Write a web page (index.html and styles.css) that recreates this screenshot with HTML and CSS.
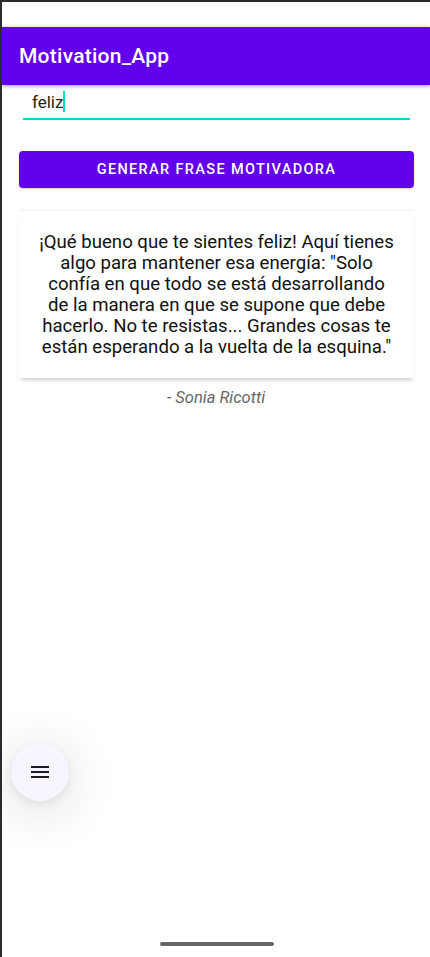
FILE: index.html
```html
<!DOCTYPE html>
<html lang="es">
<head>
<meta charset="utf-8">
<link rel="stylesheet" href="styles.css">
</head>
<body>
<div class="device">
  <div class="statusbar"></div>
  <header class="appbar"><h1 class="title">Motivation_App</h1></header>
  <main class="content">
    <div class="field"><span class="field-text">feliz</span><span class="caret"></span></div>
    <button class="btn">GENERAR FRASE MOTIVADORA</button>
    <section class="card">
      <p class="quote">¡Qué bueno que te sientes feliz! Aquí tienes<br>algo para mantener esa energía: "Solo<br>confía en que todo se está desarrollando<br>de la manera en que se supone que debe<br>hacerlo. No te resistas... Grandes cosas te<br>están esperando a la vuelta de la esquina."</p>
    </section>
    <p class="author">- Sonia Ricotti</p>
  </main>
  <button class="fab" aria-label="menu">
    <svg width="18" height="12" viewBox="0 0 18 12"><rect x="0" y="0" width="18" height="2" fill="#1c1b1f"/><rect x="0" y="5" width="18" height="2" fill="#1c1b1f"/><rect x="0" y="10" width="18" height="2" fill="#1c1b1f"/></svg>
  </button>
  <div class="home-indicator"></div>
</div>
</body>
</html>
```
FILE: styles.css
```css
html, body { margin: 0; padding: 0; background: #fff; }
.device {
  position: relative;
  width: 430px;
  height: 957px;
  box-sizing: border-box;
  border-top: 2px solid #2b2b2b;
  border-left: 2px solid #2b2b2b;
  background: #fff;
  font-family: Roboto, "Noto Sans", sans-serif;
  overflow: hidden;
}
.statusbar { height: 25px; background: #fff; }
.appbar {
  height: 58px;
  background: #6200ee;
  display: flex;
  align-items: center;
  padding-left: 17px;
  box-shadow: 0 2px 3px rgba(0,0,0,0.25), 0 -1px 3px rgba(0,0,0,0.12);
  position: relative;
  z-index: 1;
}
.title { margin: 0; color: #fff; font-size: 21px; font-weight: 500; letter-spacing: 0.25px; }
.content { display: flex; flex-direction: column; }
.field {
  margin: 0 20px 0 21px;
  height: 33px;
  border-bottom: 2px solid #03dac5;
  display: flex;
  align-items: center;
  padding-left: 9px;
}
.field-text { font-size: 17px; color: #222; }
.caret { width: 2px; height: 21px; background: #03dac5; }
.btn {
  margin: 31px 16px 0 17px;
  height: 37px;
  border: none;
  border-radius: 4px;
  background: #6200ee;
  color: #fff;
  font-family: Roboto, sans-serif;
  font-size: 14.5px;
  font-weight: 500;
  letter-spacing: 1.35px;
  box-shadow: 0 1px 2px rgba(0,0,0,0.2);
}
.card {
  margin: 23px 16px 0 17px;
  padding: 21px 10px 20px;
  background: #fff;
  box-shadow: 0 -2px 2px -1px rgba(0,0,0,0.07), 0 4px 4px -2px rgba(0,0,0,0.2);
}
.quote { margin: 0; text-align: center; font-size: 18.6px; line-height: 21px; color: #111; white-space: nowrap; }
.author { margin: 10px 0 0; text-align: center; font-size: 16.5px; font-style: italic; color: #666; }
.fab {
  position: absolute;
  left: 9px;
  top: 741px;
  width: 58px;
  height: 58px;
  border-radius: 50%;
  border: none;
  background: #f7f5fd;
  display: flex;
  align-items: center;
  justify-content: center;
  box-shadow: 0 8px 40px 14px rgba(0,0,0,0.07), 0 3px 10px rgba(0,0,0,0.08);
}
.home-indicator {
  position: absolute;
  left: 158px;
  top: 940px;
  width: 114px;
  height: 4px;
  border-radius: 2px;
  background: #666;
}
```
